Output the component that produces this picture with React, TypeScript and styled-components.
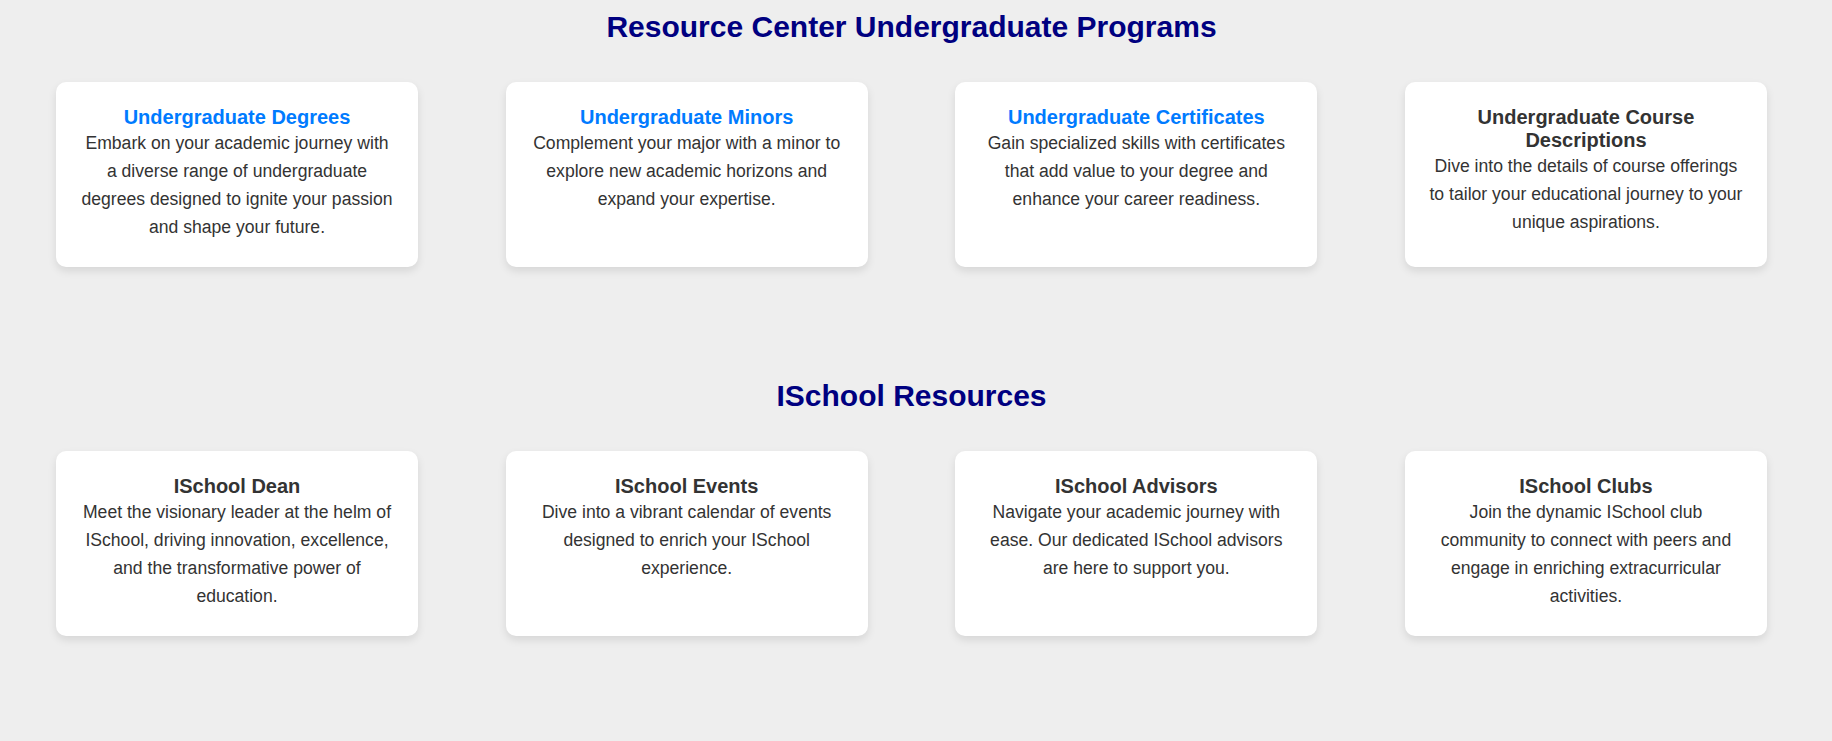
import styled, { createGlobalStyle } from "styled-components";

const GlobalStyle = createGlobalStyle`
  body {
    margin: 0;
    background-color: #eeeeee;
    font-family: "Liberation Sans", Arial, sans-serif;
    color: #333333;
  }
`;

const Page = styled.main`
  padding: 10px 65px 40px 56px;
`;

const Section = styled.section`
  margin-bottom: 112px;

  &:last-child {
    margin-bottom: 0;
  }
`;

const SectionTitle = styled.h1`
  margin: 0 0 38px;
  text-align: center;
  font-size: 30px;
  font-weight: bold;
  line-height: normal;
  color: #000080;
`;

const CardGrid = styled.div`
  display: grid;
  grid-template-columns: repeat(4, 362px);
  justify-content: space-between;
`;

const Card = styled.div`
  background-color: #ffffff;
  border-radius: 10px;
  padding: 24px 24px 25.5px;
  text-align: center;
  box-shadow: 0 4px 8px rgba(0, 0, 0, 0.1);
`;

const CardTitle = styled.h3<{ $link?: boolean }>`
  margin: 0;
  font-size: 20px;
  font-weight: bold;
  line-height: normal;
  color: ${(props) => (props.$link ? "#007bff" : "#333333")};
`;

const CardText = styled.p`
  margin: 0;
  font-size: 17.6px;
  line-height: 1.6;
  color: #333333;
`;

interface Resource {
  title: string;
  text: string;
  link?: boolean;
}

const programs: Resource[] = [
  {
    title: "Undergraduate Degrees",
    text: "Embark on your academic journey with a diverse range of undergraduate degrees designed to ignite your passion and shape your future.",
    link: true,
  },
  {
    title: "Undergraduate Minors",
    text: "Complement your major with a minor to explore new academic horizons and expand your expertise.",
    link: true,
  },
  {
    title: "Undergraduate Certificates",
    text: "Gain specialized skills with certificates that add value to your degree and enhance your career readiness.",
    link: true,
  },
  {
    title: "Undergraduate Course Descriptions",
    text: "Dive into the details of course offerings to tailor your educational journey to your unique aspirations.",
  },
];

const ischool: Resource[] = [
  {
    title: "ISchool Dean",
    text: "Meet the visionary leader at the helm of ISchool, driving innovation, excellence, and the transformative power of education.",
  },
  {
    title: "ISchool Events",
    text: "Dive into a vibrant calendar of events designed to enrich your ISchool experience.",
  },
  {
    title: "ISchool Advisors",
    text: "Navigate your academic journey with ease. Our dedicated ISchool advisors are here to support you.",
  },
  {
    title: "ISchool Clubs",
    text: "Join the dynamic ISchool club community to connect with peers and engage in enriching extracurricular activities.",
  },
];

function ResourceSection({ title, items }: { title: string; items: Resource[] }) {
  return (
    <Section>
      <SectionTitle>{title}</SectionTitle>
      <CardGrid>
        {items.map((item) => (
          <Card key={item.title}>
            <CardTitle $link={item.link}>{item.title}</CardTitle>
            <CardText>{item.text}</CardText>
          </Card>
        ))}
      </CardGrid>
    </Section>
  );
}

export default function App() {
  return (
    <>
      <GlobalStyle />
      <Page>
        <ResourceSection title="Resource Center Undergraduate Programs" items={programs} />
        <ResourceSection title="ISchool Resources" items={ischool} />
      </Page>
    </>
  );
}
